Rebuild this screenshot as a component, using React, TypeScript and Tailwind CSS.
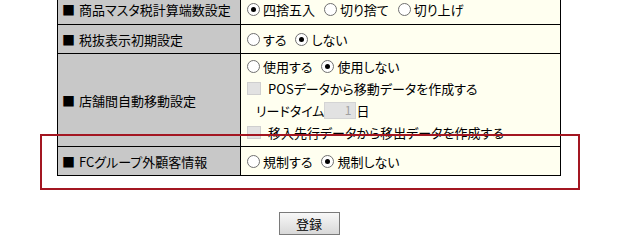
import React from "react";

const Radio = ({ checked }: { checked?: boolean }) => (
  <span className="inline-flex h-[13px] w-[13px] shrink-0 items-center justify-center rounded-full border border-[#707070] bg-white">
    {checked && <span className="h-[5px] w-[5px] rounded-full bg-black" />}
  </span>
);

const Check = () => (
  <span className="inline-block h-[13px] w-[14px] shrink-0 border border-[#cfcfcf] bg-[#e2e2e2]" />
);

const RadioGroup = ({ options, value }: { options: string[]; value: number }) => (
  <div className="flex items-center gap-[9px]">
    {options.map((o, i) => (
      <label key={o} className="flex items-center gap-[3px]">
        <Radio checked={i === value} />
        <span>{o}</span>
      </label>
    ))}
  </div>
);

const Label = ({ children }: { children: React.ReactNode }) => (
  <td className="w-[183px] border border-black bg-[#c8c8c8] pl-[4px] align-middle">
    <span className="mr-[4px]">■</span>
    {children}
  </td>
);

export default function App() {
  return (
    <div
      className="relative h-[247px] w-[632px] overflow-hidden bg-white text-[13px] leading-none text-black"
      style={{ fontFamily: '"Noto Sans CJK JP", "Noto Sans", sans-serif', fontFeatureSettings: '"palt"' }}
    >
      <div className="ml-[57px] w-[504px]">
        {/* settings table */}
        <table className="-mt-[6px] w-full border-collapse">
          <tbody>
            <tr className="h-[30px]">
              <Label>商品マスタ税計算端数設定</Label>
              <td className="border border-black bg-[#fffff0] pl-[6px]">
                <RadioGroup options={["四捨五入", "切り捨て", "切り上げ"]} value={0} />
              </td>
            </tr>
            <tr className="h-[29px]">
              <Label>税抜表示初期設定</Label>
              <td className="border border-black bg-[#fffff0] pl-[6px]">
                <RadioGroup options={["する", "しない"]} value={1} />
              </td>
            </tr>
            <tr className="h-[93px]">
              <Label>店舗間自動移動設定</Label>
              <td className="border border-black bg-[#fffff0] pl-[6px] pt-[1px] align-top">
                <div className="flex flex-col">
                  <div className="flex h-[22px] items-center">
                    <RadioGroup options={["使用する", "使用しない"]} value={1} />
                  </div>
                  <div className="flex h-[22px] items-center gap-[7px]">
                    <Check />
                    <span>POSデータから移動データを作成する</span>
                  </div>
                  <div className="flex h-[22px] items-center pl-[9px]">
                    <span>リードタイム</span>
                    <span className="flex h-[17px] w-[32px] items-center justify-end border border-[#d4d4d4] bg-[#e2e2e2] pr-[4px] text-[12px] text-[#a0a0a0]">
                      1
                    </span>
                    <span>日</span>
                  </div>
                  <div className="flex h-[22px] items-center gap-[7px]">
                    <Check />
                    <span>移入先行データから移出データを作成する</span>
                  </div>
                </div>
              </td>
            </tr>
            <tr className="h-[29px]">
              <Label>FCグループ外顧客情報</Label>
              <td className="border border-black bg-[#fffff0] pl-[6px]">
                <RadioGroup options={["規制する", "規制しない"]} value={1} />
              </td>
            </tr>
          </tbody>
        </table>

        <div className="mt-[36px] flex justify-center">
          <button className="h-[23px] w-[61px] border border-[#7a7a7a] bg-gradient-to-b from-[#f8f8f8] to-[#d8d8d8] text-[13px]">
            登録
          </button>
        </div>
      </div>

      {/* highlight frame */}
      <div className="pointer-events-none absolute left-[40px] top-[134px] h-[56px] w-[540px] border-2 border-[#a31621]" />
    </div>
  );
}
